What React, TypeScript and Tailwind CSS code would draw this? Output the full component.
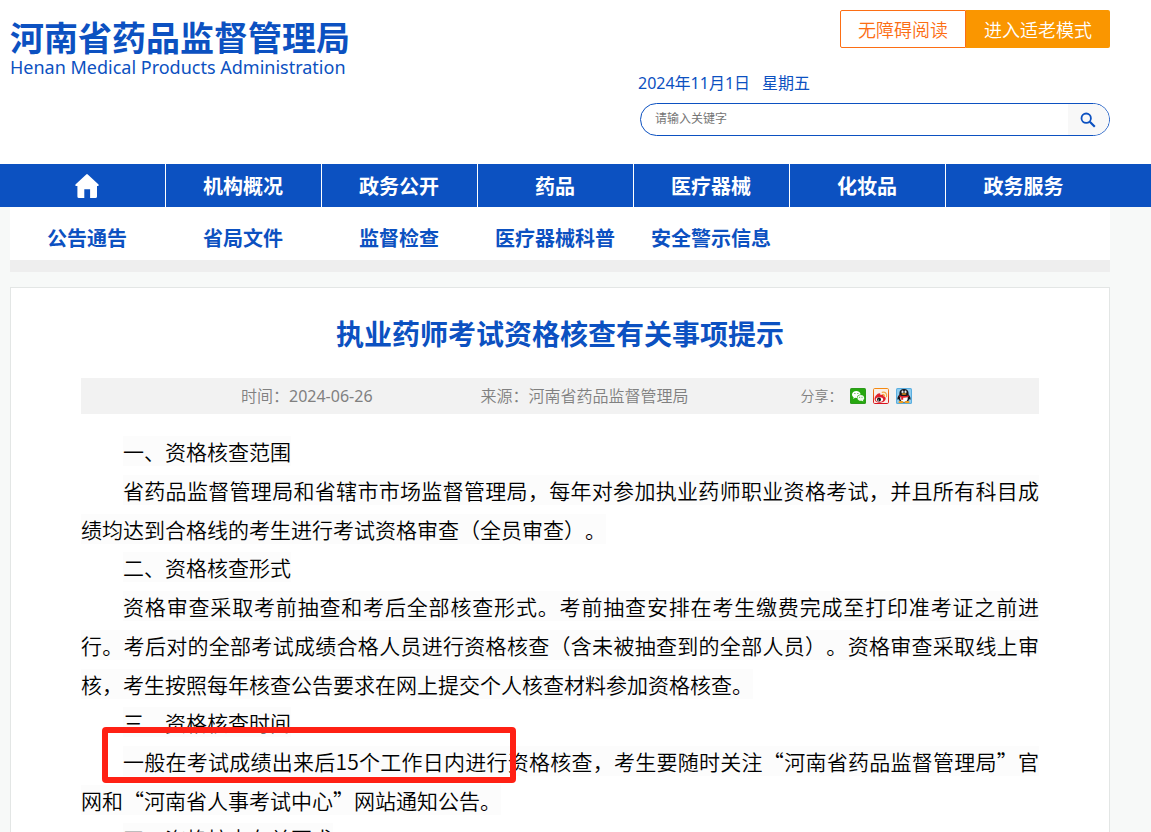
const navItems = ['机构概况', '政务公开', '药品', '医疗器械', '化妆品', '政务服务'];

const subItems = ['公告通告', '省局文件', '监督检查', '医疗器械科普', '安全警示信息'];

function HomeIcon() {
  return (
    <svg width="24" height="24" viewBox="0 0 24 24" fill="#fff" aria-hidden="true">
      <path d="M11.2.4Q12-.2 12.8.4L23.3 10.3Q24.4 11.8 22.8 12H22V22.4Q22 24 20.4 24H15.1V15.2H9.3V24H4Q2.4 24 2.4 22.4V12H1.2Q-.4 11.8.7 10.3Z" />
    </svg>
  );
}

function SearchIcon() {
  return (
    <svg width="16" height="16" viewBox="0 0 16 16" fill="none" stroke="#0c51c1" aria-hidden="true">
      <circle cx="6.2" cy="6.2" r="4.7" strokeWidth="1.8" />
      <path d="M9.8 9.8L14.8 14.8" strokeWidth="2.2" />
    </svg>
  );
}

function WechatIcon() {
  return (
    <svg width="16" height="16" viewBox="0 0 16 16" aria-hidden="true">
      <rect width="16" height="16" rx="1.5" fill="#2d9a1c" />
      <rect x="1" y="1" width="14" height="14" rx="1" fill="#27a80f" />
      <path d="M2 6.6C2 4.5 3.9 3 6.3 3s4.2 1.4 4.3 3.4C8.3 6.5 6.7 8 6.9 10l-1.9-.2L3.3 10.9l.3-1.6C2.6 8.7 2 7.7 2 6.6Z" fill="#fff" />
      <path d="M7.4 9.9c0-1.7 1.5-2.9 3.4-2.9s3.4 1.2 3.4 2.9c0 .9-.5 1.7-1.2 2.2l.3 1.4-1.5-.8c-2.5.4-4.4-.9-4.4-2.8Z" fill="#f1fbef" />
      <circle cx="4.9" cy="5.5" r=".6" fill="#27a80f" />
      <circle cx="7.9" cy="5.5" r=".6" fill="#27a80f" />
      <circle cx="9.7" cy="9.2" r=".5" fill="#27a80f" />
      <circle cx="12" cy="9.2" r=".5" fill="#27a80f" />
    </svg>
  );
}

function WeiboIcon() {
  return (
    <svg width="16" height="16" viewBox="0 0 16 16" aria-hidden="true">
      <defs>
        <linearGradient id="weibo-edge" x1="0" y1="0" x2="0" y2="1">
          <stop offset="0" stopColor="#f58a10" />
          <stop offset="1" stopColor="#d81420" />
        </linearGradient>
      </defs>
      <rect x=".5" y=".5" width="15" height="15" rx="1.2" fill="#f9efe9" stroke="url(#weibo-edge)" />
      <path d="M1.6 11C1.6 8.4 4.4 5.2 6.3 5.2c1.1 0 1.3.9 1 1.8 1.8-.6 3.7-.5 3.4 1.3 1.2.3 2 1 2 2.3 0 2.3-2.6 4.1-5.6 4.1S1.6 13.4 1.6 11Z" fill="#e0202c" />
      <ellipse cx="6.5" cy="11.5" rx="3.6" ry="2.3" fill="#fff" />
      <circle cx="6" cy="11.6" r="2" fill="#111" />
      <circle cx="5.5" cy="12" r=".6" fill="#fff" />
      <path d="M9.2 4.3c2.9-.8 5 1.3 4.3 4.4M9.5 6.5c1.3-.3 2.2.6 1.9 1.9" fill="none" stroke="#f5a845" strokeWidth="1.2" strokeLinecap="round" />
    </svg>
  );
}

function QQIcon() {
  return (
    <svg width="16" height="16" viewBox="0 0 16 16" aria-hidden="true">
      <rect width="16" height="16" rx="1.5" fill="#5aaee0" />
      <rect x="1" y="1" width="14" height="14" rx="1" fill="#8fcdf0" />
      <path d="M8 1c3.1 0 4.6 1.9 4.6 4.2v1.3c1.4 1.6 2.4 3.6 1.8 5.3-.4.2-.8-.2-1.2-.8-.3 2.3-2.7 3.6-5.2 3.6S3.1 13.3 2.8 11c-.4.6-.8 1-1.2.8C1 10.1 2 8.1 3.4 6.5V5.2C3.4 2.9 4.9 1 8 1Z" fill="#15151b" />
      <path d="M4.5 8.6h7c.8 3.5-.8 5.4-3.5 5.4s-4.3-1.9-3.5-5.4Z" fill="#fff" />
      <ellipse cx="6.5" cy="3.9" rx="1" ry="1.3" fill="#fff" />
      <ellipse cx="9.5" cy="3.9" rx="1" ry="1.3" fill="#fff" />
      <circle cx="6.9" cy="4.1" r=".4" fill="#000" />
      <circle cx="9.1" cy="4.1" r=".4" fill="#000" />
      <ellipse cx="8" cy="6" rx="2.6" ry=".8" fill="#f6a01a" />
      <path d="M3.5 7.2c3 1.2 6 1.2 9 0l.3 1.5c-1.8.9-3.8 1.2-5.6 1.1v1.9H5.2V9.3L3.3 8.7Z" fill="#e0222a" />
      <ellipse cx="4.9" cy="14.2" rx="2.5" ry="1.1" fill="#f6a01a" />
      <ellipse cx="11.1" cy="14.2" rx="2.5" ry="1.1" fill="#f6a01a" />
    </svg>
  );
}

function Heading({ children }: { children: string }) {
  return (
    <h2 className="indent-[42px] leading-[36px] pb-0.5">
      <span className="bg-[#fcfcfc]">{children}</span>
    </h2>
  );
}

function Paragraph({ children }: { children: string }) {
  return (
    <p className="indent-[42px] leading-[39px] text-justify">
      <span className="bg-[#fcfcfc]">{children}</span>
    </p>
  );
}

export default function App() {
  return (
    <div
      lang="zh-CN"
      className="h-screen overflow-hidden bg-[#f7f9f8] font-['Noto_Sans','Noto_Sans_CJK_SC',sans-serif] [text-spacing-trim:space-all]"
    >
      {/* Header */}
      <header className="bg-white pl-[10px] pr-[41px] pb-7 flex justify-between">
        <a href="#" className="block pt-[18px] text-[#0c51c1] whitespace-nowrap">
          <span className="block text-[34px] leading-[40px] font-bold">河南省药品监督管理局</span>
          <span className="block text-[18px] leading-[18px]">Henan Medical Products Administration</span>
        </a>

        <div className="w-[472px] pt-[10px]">
          <div className="flex justify-end text-[18px] font-[350]">
            <button className="h-[38px] px-[17px] pt-0.5 border border-[#fc6e14] rounded-l-xs bg-white text-[#fc6e14]">
              无障碍阅读
            </button>
            <button className="h-[38px] px-[18px] pt-0.5 rounded-r-xs bg-[#fa9600] text-white">进入适老模式</button>
          </div>
          <div className="mt-[23px] flex gap-3 text-base leading-[24px] text-[#0c51c1]">
            <span>2024年11月1日</span>
            <span>星期五</span>
          </div>
          <form className="mt-2 ml-0.5 h-[33px] flex border border-[#0c51c1] rounded-full overflow-hidden">
            <input
              type="text"
              aria-label="请输入关键字"
              placeholder="请输入关键字"
              className="flex-1 min-w-0 pl-[14px] pb-0.5 text-xs outline-none placeholder:text-[#757575]"
            />
            <button type="button" aria-label="搜索" className="w-[41px] pr-0.5 flex items-center justify-center bg-[#f8f8f8]">
              <SearchIcon />
            </button>
          </form>
        </div>
      </header>

      {/* Main nav */}
      <nav className="bg-[#0c51c1] pl-[10px] flex h-[43px] text-xl font-bold text-white">
        <a
          href="#"
          aria-label="首页"
          className="w-[156px] pr-px pt-px border-r border-white flex items-center justify-center"
        >
          <HomeIcon />
        </a>
        {navItems.map((item) => (
          <a
            key={item}
            href="#"
            className="w-[156px] pr-px pt-0.5 border-r border-white last:border-r-0 flex items-center justify-center"
          >
            {item}
          </a>
        ))}
      </nav>

      <main className="pl-[10px] pr-[41px]">
        {/* Sub nav */}
        <nav className="flex bg-white border-b-12 border-[#eee] pt-3 pb-px text-xl font-bold text-[#0c51c1]">
          {subItems.map((item) => (
            <a key={item} href="#" className="w-[156px] h-10 pr-0.5 flex items-center justify-center whitespace-nowrap">
              {item}
            </a>
          ))}
        </nav>

        {/* Article */}
        <article className="mt-[15px] px-[70px] pt-6 bg-white border border-[#e3e6e5]">
          <h1 className="text-[28px] leading-[44px] font-bold text-center text-[#0c51c1]">
            执业药师考试资格核查有关事项提示
          </h1>

          <div className="mt-[22px] h-9 pl-40 flex items-center bg-[#f2f2f2] text-base font-[350] text-[#808080] whitespace-nowrap">
            <span>
              时间：<time className="font-normal">2024-06-26</time>
            </span>
            <span className="ml-[108px]">来源：河南省药品监督管理局</span>
            <div className="ml-28 flex items-center gap-[7px] text-sm">
              <span>分享：</span>
              <a href="#" aria-label="微信">
                <WechatIcon />
              </a>
              <a href="#" aria-label="微博">
                <WeiboIcon />
              </a>
              <a href="#" aria-label="QQ">
                <QQIcon />
              </a>
            </div>
          </div>

          {/* CJK font goes first here so the quotation marks keep their full width */}
          <div className="mt-[19px] text-[21px] font-[350] text-black font-['Noto_Sans_CJK_SC',sans-serif]">
            <Heading>一、资格核查范围</Heading>
            <Paragraph>
              省药品监督管理局和省辖市市场监督管理局，每年对参加执业药师职业资格考试，并且所有科目成绩均达到合格线的考生进行考试资格审查（全员审查）。
            </Paragraph>
            <Heading>二、资格核查形式</Heading>
            <Paragraph>
              资格审查采取考前抽查和考后全部核查形式。考前抽查安排在考生缴费完成至打印准考证之前进行。考后对的全部考试成绩合格人员进行资格核查（含未被抽查到的全部人员）。资格审查采取线上审核，考生按照每年核查公告要求在网上提交个人核查材料参加资格核查。
            </Paragraph>
            <Heading>三、资格核查时间</Heading>
            <div className="relative">
              <Paragraph>
                一般在考试成绩出来后15个工作日内进行资格核查，考生要随时关注“河南省药品监督管理局”官网和“河南省人事考试中心”网站通知公告。
              </Paragraph>
              {/* highlight frame */}
              <div className="absolute left-[21px] -top-[15px] w-[414px] h-14 border-6 border-[#ff2014] rounded-sm" />
            </div>
            <Heading>四、资格核查有关要求</Heading>
          </div>
        </article>
      </main>
    </div>
  );
}
